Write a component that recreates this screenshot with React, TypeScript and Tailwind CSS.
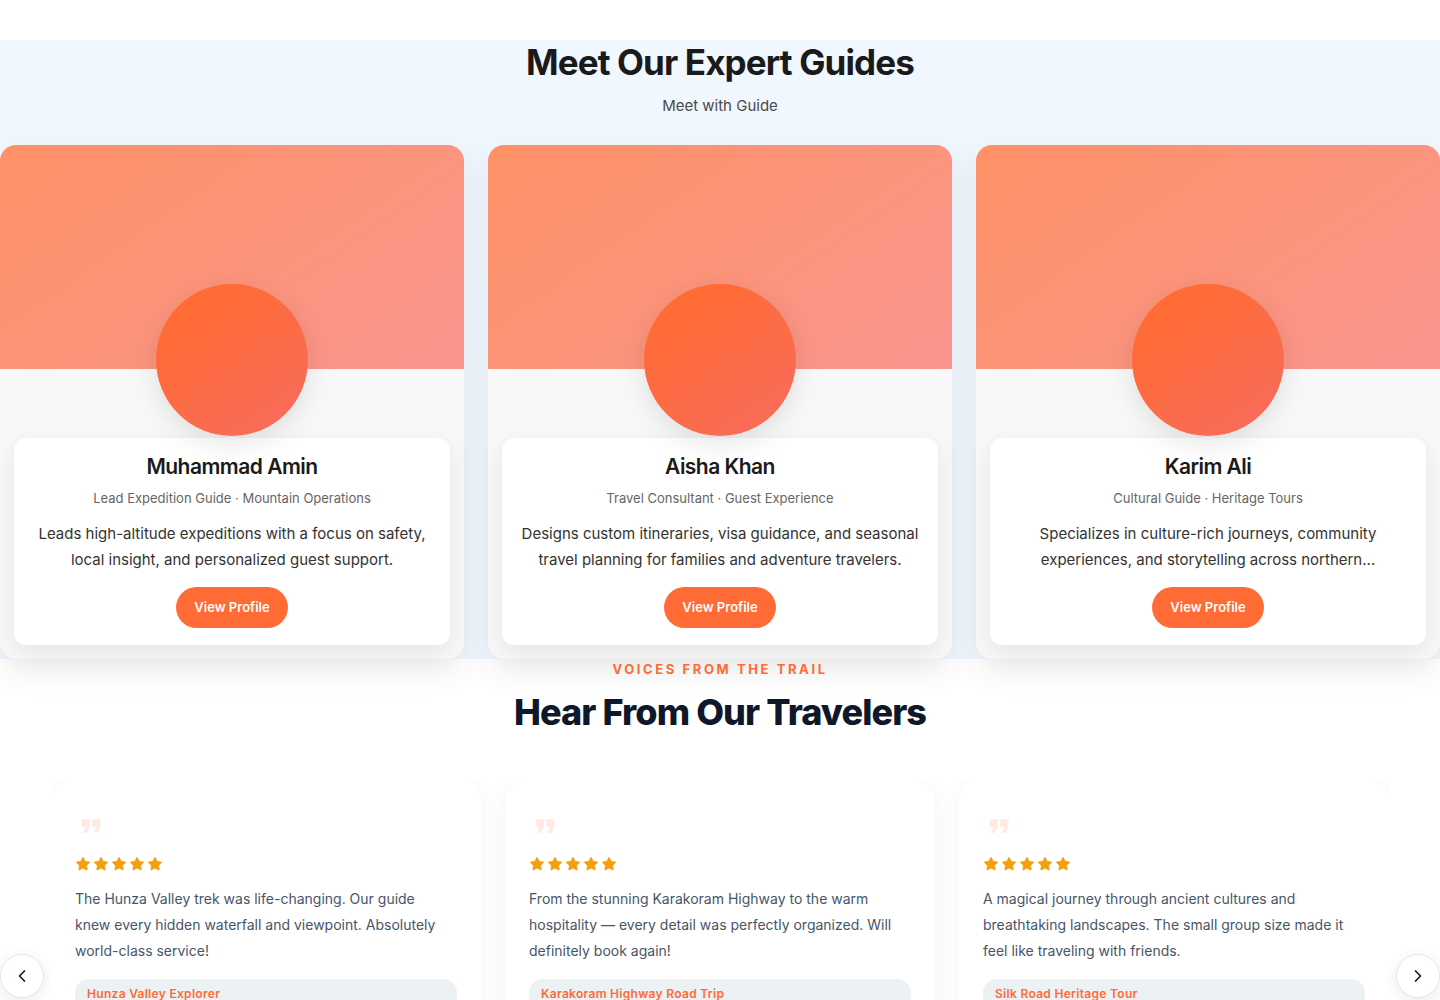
import { MdFormatQuote } from "react-icons/md";
import { ChevronLeft, ChevronRight, Star } from "lucide-react";

const guides = [
  {
    name: "Muhammad Amin",
    role: "Lead Expedition Guide · Mountain Operations",
    bio: "Leads high-altitude expeditions with a focus on safety, local insight, and personalized guest support.",
  },
  {
    name: "Aisha Khan",
    role: "Travel Consultant · Guest Experience",
    bio: "Designs custom itineraries, visa guidance, and seasonal travel planning for families and adventure travelers.",
  },
  {
    name: "Karim Ali",
    role: "Cultural Guide · Heritage Tours",
    bio: "Specializes in culture-rich journeys, community experiences, and storytelling across northern...",
  },
];

const testimonials = [
  {
    tour: "Hunza Valley Explorer",
    text: "The Hunza Valley trek was life-changing. Our guide knew every hidden waterfall and viewpoint. Absolutely world-class service!",
  },
  {
    tour: "Karakoram Highway Road Trip",
    text: "From the stunning Karakoram Highway to the warm hospitality — every detail was perfectly organized. Will definitely book again!",
  },
  {
    tour: "Silk Road Heritage Tour",
    text: "A magical journey through ancient cultures and breathtaking landscapes. The small group size made it feel like traveling with friends.",
  },
];

type Guide = (typeof guides)[number];
type Testimonial = (typeof testimonials)[number];

function GuideCard({ name, role, bio }: Guide) {
  return (
    <article className="rounded-2xl bg-[#f8f8f8] pb-3.5 shadow-[0_12px_32px_rgba(0,0,0,0.08)]">
      <div className="h-56 rounded-t-2xl bg-linear-[145deg,#ff9166,#fa968f]" />
      <div className="relative z-10 mx-auto -mt-[85px] size-38 rounded-full bg-linear-[145deg,#ff6b35_20%,#f76c5e] shadow-[0_8px_28px_rgba(0,0,0,0.1)]" />
      <div className="mx-3.5 mt-0.5 flex flex-col items-center rounded-xl bg-white px-4 pt-[15px] pb-[17px] text-center shadow-[0_8px_24px_rgba(0,0,0,0.08)]">
        <h3 className="text-[21px] leading-7 font-semibold tracking-tight text-[#1a1a1a]">
          {name}
        </h3>
        <p className="mt-[7px] text-[13px] leading-5 text-[#666]">{role}</p>
        <p className="mt-[13px] text-[15px] leading-[26px] text-[#333]">{bio}</p>
        <button className="mt-3.5 rounded-full bg-[#ff6b35] px-[18px] py-2.5 text-[13px] leading-[21px] font-semibold text-white">
          View Profile
        </button>
      </div>
    </article>
  );
}

function TestimonialCard({ tour, text }: Testimonial) {
  return (
    <article className="min-h-[390px] rounded-[20px] bg-white px-6 pt-[29px] pb-6 shadow-[0_4px_24px_rgba(0,0,0,0.05)]">
      <MdFormatQuote className="size-8 text-[#ff6b35]/15" />
      <div className="mt-3.5 flex gap-0.5" role="img" aria-label="5 stars">
        {[1, 2, 3, 4, 5].map((star) => (
          <Star
            key={star}
            strokeWidth={1}
            className="size-4 fill-[#f59e0b] text-[#f59e0b]"
          />
        ))}
      </div>
      <p className="mt-3.5 pr-2 text-sm leading-[26px] text-[#475569]">{text}</p>
      <p className="mt-[15px] rounded-[14px] bg-[#ecf1f4] px-3 py-[5px] text-xs leading-5 font-semibold tracking-wide text-[#ff6b35]">
        {tour}
      </p>
    </article>
  );
}

export default function App() {
  return (
    <main className="bg-white pt-10 font-[Inter,sans-serif]">
      <section className="bg-[#f0f7ff]">
        <div className="text-center">
          <h2 className="text-[35px] leading-11 font-bold tracking-tight text-[#1a1a1a]">
            Meet Our Expert Guides
          </h2>
          <p className="mt-[9px] text-[15px] leading-[26px] text-[#4a4a4a]">
            Meet with Guide
          </p>
        </div>
        <div className="mt-[26px] grid grid-cols-3 gap-6">
          {guides.map((guide) => (
            <GuideCard key={guide.name} {...guide} />
          ))}
        </div>
      </section>
      <section>
        <div className="text-center">
          <p className="text-[13px] leading-5 font-bold tracking-[0.2em] text-[#ff6b35] uppercase">
            Voices from the trail
          </p>
          <h2 className="mt-[11px] text-4xl leading-11 font-extrabold tracking-tight text-[#0f172a]">
            Hear From Our Travelers
          </h2>
        </div>
        <div className="mt-[47px] flex items-center gap-[7px]">
          <button
            aria-label="Previous"
            className="flex size-11 shrink-0 items-center justify-center rounded-full border border-[#e2e8f0] bg-white text-[#0f172a] shadow-[0_4px_16px_rgba(0,0,0,0.08)]"
          >
            <ChevronLeft size={20} />
          </button>
          <div className="grid flex-1 grid-cols-3 gap-6 overflow-hidden">
            {testimonials.map((testimonial) => (
              <TestimonialCard key={testimonial.tour} {...testimonial} />
            ))}
          </div>
          <button
            aria-label="Next"
            className="flex size-11 shrink-0 items-center justify-center rounded-full border border-[#e2e8f0] bg-white text-[#0f172a] shadow-[0_4px_16px_rgba(0,0,0,0.08)]"
          >
            <ChevronRight size={20} />
          </button>
        </div>
      </section>
    </main>
  );
}
